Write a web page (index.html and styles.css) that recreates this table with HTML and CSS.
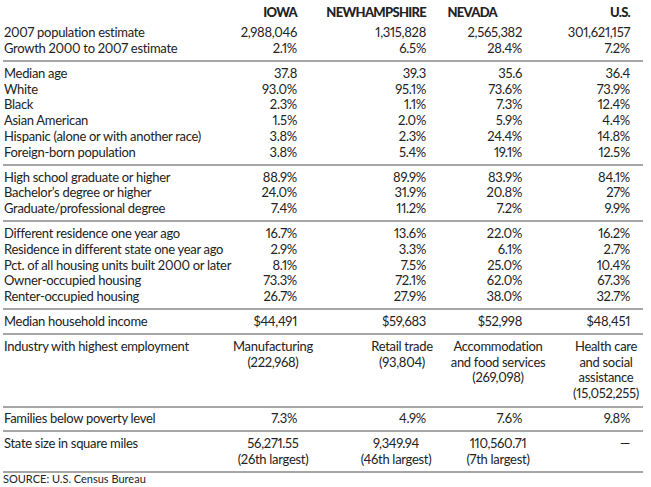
FILE: index.html
```html
<!DOCTYPE html>
<html lang="en">
<head>
    <meta charset="UTF-8">
    <meta name="viewport" content="width=device-width, initial-scale=1.0">
    <title>Iowa, New Hampshire, Nevada and U.S. - Census profile</title>
    <link rel="stylesheet" href="styles.css">
</head>
<body>
    <table class="stats">
        <colgroup>
            <col class="col-label">
            <col class="col-ia">
            <col class="col-nh">
            <col class="col-nv">
            <col class="col-us">
        </colgroup>
        <thead>
            <tr>
                <th></th>
                <th>IOWA</th>
                <th>NEWHAMPSHIRE</th>
                <th class="nv-head">NEVADA</th>
                <th>U.S.</th>
            </tr>
        </thead>

        <!-- Population -->
        <tbody class="first">
            <tr><td>2007 population estimate</td><td>2,988,046</td><td>1,315,828</td><td>2,565,382</td><td>301,621,157</td></tr>
            <tr><td>Growth 2000 to 2007 estimate</td><td>2.1%</td><td>6.5%</td><td>28.4%</td><td>7.2%</td></tr>
        </tbody>

        <!-- Age and race -->
        <tbody>
            <tr><td>Median age</td><td>37.8</td><td>39.3</td><td>35.6</td><td>36.4</td></tr>
            <tr><td>White</td><td>93.0%</td><td>95.1%</td><td>73.6%</td><td>73.9%</td></tr>
            <tr><td>Black</td><td>2.3%</td><td>1.1%</td><td>7.3%</td><td>12.4%</td></tr>
            <tr><td>Asian American</td><td>1.5%</td><td>2.0%</td><td>5.9%</td><td>4.4%</td></tr>
            <tr><td>Hispanic (alone or with another race)</td><td>3.8%</td><td>2.3%</td><td>24.4%</td><td>14.8%</td></tr>
            <tr><td>Foreign-born population</td><td>3.8%</td><td>5.4%</td><td>19.1%</td><td>12.5%</td></tr>
        </tbody>

        <!-- Education -->
        <tbody>
            <tr><td>High school graduate or higher</td><td>88.9%</td><td>89.9%</td><td>83.9%</td><td>84.1%</td></tr>
            <tr><td>Bachelor’s degree or higher</td><td>24.0%</td><td>31.9%</td><td>20.8%</td><td>27%</td></tr>
            <tr><td>Graduate/professional degree</td><td>7.4%</td><td>11.2%</td><td>7.2%</td><td>9.9%</td></tr>
        </tbody>

        <!-- Housing -->
        <tbody>
            <tr><td>Different residence one year ago</td><td>16.7%</td><td>13.6%</td><td>22.0%</td><td>16.2%</td></tr>
            <tr><td>Residence in different state one year ago</td><td>2.9%</td><td>3.3%</td><td>6.1%</td><td>2.7%</td></tr>
            <tr><td>Pct. of all housing units built 2000 or later</td><td>8.1%</td><td>7.5%</td><td>25.0%</td><td>10.4%</td></tr>
            <tr><td>Owner-occupied housing</td><td>73.3%</td><td>72.1%</td><td>62.0%</td><td>67.3%</td></tr>
            <tr><td>Renter-occupied housing</td><td>26.7%</td><td>27.9%</td><td>38.0%</td><td>32.7%</td></tr>
        </tbody>

        <tbody>
            <tr><td>Median household income</td><td>$44,491</td><td>$59,683</td><td>$52,998</td><td>$48,451</td></tr>
        </tbody>

        <tbody>
            <tr>
                <td>Industry with highest employment</td>
                <td><span class="multi"><span>Manufacturing<br>(222,968)</span></span></td>
                <td><span class="multi"><span>Retail trade<br>(93,804)</span></span></td>
                <td><span class="multi"><span>Accommodation<br>and food services<br>(269,098)</span></span></td>
                <td><span class="multi"><span>Health care<br>and social<br>assistance<br>(15,052,255)</span></span></td>
            </tr>
        </tbody>

        <tbody>
            <tr><td>Families below poverty level</td><td>7.3%</td><td>4.9%</td><td>7.6%</td><td>9.8%</td></tr>
        </tbody>

        <tbody>
            <tr>
                <td>State size in square miles</td>
                <td><span class="multi"><span>56,271.55<br>(26th largest)</span></span></td>
                <td><span class="multi nudge"><span>9,349.94<br>(46th largest)</span></span></td>
                <td><span class="multi"><span>110,560.71<br>(7th largest)</span></span></td>
                <td>—</td>
            </tr>
        </tbody>
    </table>

    <p class="source">SOURCE: U.S. Census Bureau</p>
</body>
</html>
```

FILE: styles.css
```css
body {
    font-family: Lato, "Liberation Sans", sans-serif;
    color: #222;
    background-color: #fff;
    margin: 0;
    padding: 0 0 0 3px;
}
.stats {
    width: 640px;
    table-layout: fixed;
    border-collapse: collapse;
    font-size: 13px;
    line-height: 15.75px;
    letter-spacing: -0.3px;
    font-variant-numeric: proportional-nums;
}
.col-label { width: 227px; }
.col-ia { width: 67px; }
.col-nh { width: 129px; }
.col-nv { width: 96px; }
.col-us { width: 121px; }

th {
    font-weight: 900;
    font-size: 13px;
    letter-spacing: -0.7px;
    text-align: right;
    padding: 5px 0 1px 0;
    white-space: nowrap;
}
th.nv-head {
    padding-right: 25px;
}
td {
    padding: 0;
    text-align: right;
    vertical-align: top;
    white-space: nowrap;
}
td:first-child {
    text-align: left;
    padding-left: 1px;
}
th:last-child,
td:last-child {
    padding-right: 13px;
}
tbody {
    border-bottom: 2px solid #a6a6a6;
}
tbody tr:first-child td {
    padding-top: 3.6px;
}
tbody tr:last-child td {
    padding-bottom: 3.6px;
}
tbody.first tr:first-child td {
    padding-top: 3.5px;
}
/* centred block that sits around the number column */
.multi {
    display: inline-flex;
    justify-content: center;
    width: 48px;
    text-align: center;
}
.multi > span {
    flex: none;
}
.multi.nudge {
    margin-right: 6px;
}
.source {
    font-size: 11px;
    margin: 0;
    line-height: 11px;
}
```
